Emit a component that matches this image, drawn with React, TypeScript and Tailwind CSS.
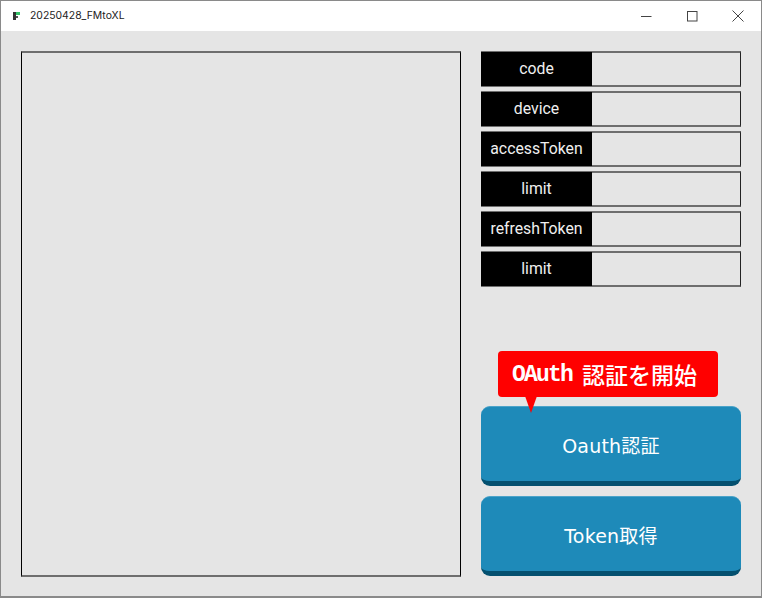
const fields = ["code", "device", "accessToken", "limit", "refreshToken", "limit"];

function Field({ label }: { label: string }) {
  return (
    <div className="flex h-9 border-t-2 border-b-2 border-r border-[#6e6e6e] border-r-[#222]">
      <div className="w-[111px] -my-[1px] bg-black flex items-center justify-center text-[#f0f0f0] text-[15.8px] font-['Roboto',sans-serif]">
        {label}
      </div>
    </div>
  );
}

function BigButton({ label }: { label: string }) {
  return (
    <button className="h-20 w-full pt-[4px] rounded-[9px] bg-[#1e8ab9] border-t border-t-[#4ba3c9] border-b-[5px] border-b-[#04506f] text-white text-[19px] font-normal tracking-[0.2px] font-['DejaVu_Sans','Noto_Sans_CJK_JP',sans-serif]">
      {label}
    </button>
  );
}

export default function App() {
  return (
    <div className="w-[762px] h-[598px] flex flex-col bg-[#e5e5e5] border-t border-l border-r border-[#8a8a8a] border-b-2 border-b-[#8a8a8a] font-['Liberation_Sans',sans-serif]">
      <div className="h-[30px] bg-white flex items-center shrink-0">
        <svg className="ml-[11px] mr-[8px]" width="10" height="10" viewBox="0 0 10 10">
          <rect x="1" y="1" width="3" height="8" fill="#333" />
          <rect x="4" y="1" width="4" height="3" fill="#35c46a" />
          <rect x="4" y="5" width="2" height="2" fill="#555" />
        </svg>
        <span className="text-[10.4px] text-[#222] font-['Inter',sans-serif]">20250428_FMtoXL</span>
        <div className="ml-auto flex items-center">
          <svg className="mr-[35px]" width="11" height="11" viewBox="0 0 11 11">
            <path d="M0 5.5h10.5" stroke="#444" strokeWidth="1" />
          </svg>
          <svg className="mr-[34px]" width="11" height="11" viewBox="0 0 11 11">
            <rect x="0.5" y="0.5" width="9.5" height="9.5" fill="none" stroke="#444" strokeWidth="1" />
          </svg>
          <svg className="mr-[17px]" width="12" height="12" viewBox="0 0 12 12">
            <path d="M0.5 0.5L11.5 11.5M11.5 0.5L0.5 11.5" stroke="#444" strokeWidth="1" />
          </svg>
        </div>
      </div>

      <div className="flex-1 flex gap-5 pl-5 pr-5 pt-5 pb-5">
        <div className="w-[440px] -mb-[1px] border border-black border-t-2 border-t-[#6e6e6e] border-b-2 border-b-[#6e6e6e]" />

        <div className="w-[260px] flex flex-col">
          <div className="flex flex-col gap-1">
            {fields.map((f, i) => (
              <Field key={i} label={f} />
            ))}
          </div>

          <div className="mt-auto flex flex-col gap-[10px] relative">
            <div className="absolute left-[17px] -top-[55px] z-10 w-[220px] h-[46px] rounded-[4px] bg-[#ff0000] flex items-center pl-[14px] text-white whitespace-nowrap">
              <span className="text-[23px] pt-[2px] tracking-[-1.8px] font-bold font-['Liberation_Mono',monospace]">OAuth</span>
              <span className="ml-[10px] text-[23px] font-medium font-['Noto_Sans_CJK_JP',sans-serif]">認証を開始</span>
              <span className="absolute left-[27px] top-[45px] border-l-[6px] border-r-[6px] border-t-[17px] border-l-transparent border-r-transparent border-t-[#ff0000]" />
            </div>
            <BigButton label="Oauth認証" />
            <BigButton label="Token取得" />
          </div>
        </div>
      </div>
    </div>
  );
}
